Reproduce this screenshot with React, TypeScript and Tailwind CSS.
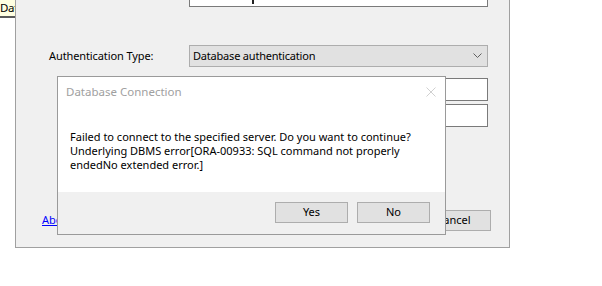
import React from "react";

export default function App() {
  const font = { fontFamily: '"Noto Sans", "Open Sans", sans-serif' };
  return (
    <div
      className="relative w-[602px] h-[286px] bg-white overflow-hidden flex items-start text-[11px] text-black"
      style={font}
    >
      {/* left tooltip fragment */}
      <div className="w-[15px] flex flex-col">
        <div className="h-[16px] bg-[#ffffe1] overflow-hidden whitespace-nowrap leading-[15px] text-[11.5px] tracking-[-0.3px]">Dat</div>
        <div className="h-[2px] bg-[#5a5a5a]" />
      </div>

      {/* main window */}
      <div className="w-[495px] h-[248px] bg-[#f0f0f0] border-l border-r border-b border-[#a0a0a0] flex flex-col">
        <div className="ml-[173px] w-[299px] h-[7px] bg-white border-l border-r border-b border-[#7a7a7a] relative">
          <div className="absolute left-[62px] top-0 w-[2px] h-[4px] bg-[#222]" />
        </div>
        <div className="mt-[38px] flex items-center h-[22px]">
          <div className="ml-[33px] w-[140px] tracking-[-0.1px]">Authentication Type:</div>
          <div className="w-[299px] h-[22px] bg-[#e1e1e1] border border-[#adadad] flex items-center justify-between pl-[3px] pr-[5px]">
            <span className="tracking-[-0.2px]">Database authentication</span>
            <svg width="9" height="6" viewBox="0 0 9 6">
              <path d="M0.5 0.5 L4.5 4.5 L8.5 0.5" fill="none" stroke="#606060" strokeWidth="1" />
            </svg>
          </div>
        </div>
        <div className="mt-[11px] ml-[173px] w-[299px] h-[23px] bg-white border border-[#7a7a7a]" />
        <div className="mt-[3px] ml-[173px] w-[299px] h-[23px] bg-white border border-[#7a7a7a]" />
        <div className="mt-[83px] flex items-center h-[21px]">
          <a className="ml-[26px] text-[#0000ff] underline">About</a>
          <div className="ml-auto mr-[18px] w-[75px] h-[21px] bg-[#e1e1e1] border border-[#adadad] flex items-center justify-center">
            Cancel
          </div>
        </div>
      </div>

      {/* dialog overlay */}
      <div className="absolute left-[57px] top-[76px] w-[389px] h-[159px] bg-white border border-[#9a9a9a] flex flex-col">
        <div className="h-[29px] flex items-center justify-between pl-[8px] pr-[9px] pt-[1px]">
          <span className="text-[#a0a0a0] text-[11.5px]">Database Connection</span>
          <svg width="10" height="10" viewBox="0 0 10 10">
            <path d="M0.5 0.5 L9.5 9.5 M9.5 0.5 L0.5 9.5" stroke="#d0d0d0" strokeWidth="1" />
          </svg>
        </div>
        <div className="flex-1 pl-[12px] pt-[24px] leading-[14px]">
          <div>Failed to connect to the specified server. Do you want to continue?</div>
          <div>Underlying DBMS error[ORA-00933: SQL command not properly</div>
          <div>endedNo extended error.]</div>
        </div>
        <div className="h-[42px] bg-[#f0f0f0] flex items-start justify-end pt-[10px] pr-[15px] gap-[9px]">
          <div className="w-[73px] h-[21px] bg-[#e1e1e1] border border-[#adadad] flex items-center justify-center">Yes</div>
          <div className="w-[73px] h-[21px] bg-[#e1e1e1] border border-[#adadad] flex items-center justify-center">No</div>
        </div>
      </div>
    </div>
  );
}
